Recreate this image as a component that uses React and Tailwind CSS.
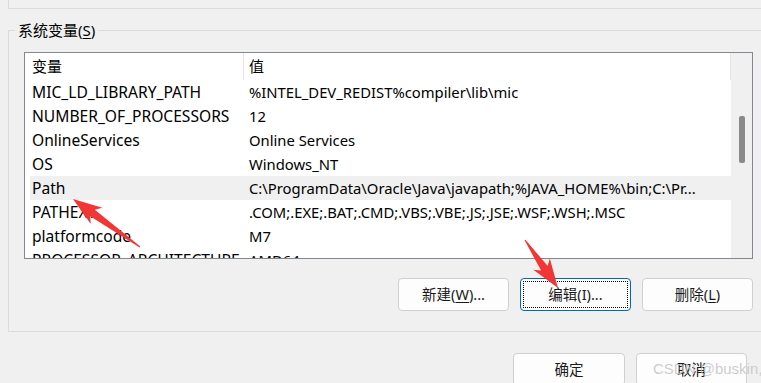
import React from 'react';

const rows = [
  { name: 'MIC_LD_LIBRARY_PATH', value: '%INTEL_DEV_REDIST%compiler\\lib\\mic' },
  { name: 'NUMBER_OF_PROCESSORS', value: '12' },
  { name: 'OnlineServices', value: 'Online Services' },
  { name: 'OS', value: 'Windows_NT' },
  { name: 'Path', value: 'C:\\ProgramData\\Oracle\\Java\\javapath;%JAVA_HOME%\\bin;C:\\Pr...', selected: true },
  { name: 'PATHEXT', value: '.COM;.EXE;.BAT;.CMD;.VBS;.VBE;.JS;.JSE;.WSF;.WSH;.MSC' },
  { name: 'platformcode', value: 'M7' },
  { name: 'PROCESSOR_ARCHITECTURE', value: 'AMD64' },
];

// red annotation arrow, tail -> tip
const arrowPoints = (x1, y1, x2, y2) => {
  const dx = x2 - x1;
  const dy = y2 - y1;
  const len = Math.hypot(dx, dy);
  const ux = dx / len;
  const uy = dy / len;
  const nx = -uy;
  const ny = ux;
  const headLen = 24;
  const bx = x2 - ux * headLen;
  const by = y2 - uy * headLen;
  const wx = bx - ux * 5;
  const wy = by - uy * 5;
  const pts = [
    [x1 - nx * 0.5, y1 - ny * 0.5],
    [x1 + nx * 0.5, y1 + ny * 0.5],
    [bx + nx * 4, by + ny * 4],
    [wx + nx * 10, wy + ny * 10],
    [x2, y2],
    [wx - nx * 10, wy - ny * 10],
    [bx - nx * 4, by - ny * 4],
  ];
  return pts.map(p => p.join(',')).join(' ');
};

const Btn = ({ children, focused, className = '' }) => (
  <button
    className={`relative h-[33px] w-[111px] rounded-[4px] border bg-[#fdfdfd] text-[14.5px] text-[#1a1a1a] ${
      focused ? 'border-[#0067c0]' : 'border-[#d0d0d0]'
    } ${className}`}
  >
    {focused && <span className="absolute inset-[2px] border border-dotted border-black" />}
    {children}
  </button>
);

export default function App() {
  return (
    <div
      className="relative h-[383px] w-[761px] overflow-hidden bg-[#f0f0f0] text-[14.5px] text-black"
      style={{ fontFamily: "'Segoe UI','Noto Sans','Noto Sans CJK SC',sans-serif" }}
    >
      {/* previous group (cut off) */}
      <div className="ml-2 h-[9px] border-b border-l border-[#dcdcdc]" />

      {/* 系统变量 group */}
      <div className="relative ml-2 mt-[21px] h-[302px] w-[760px] border border-[#dcdcdc] pl-[15px] pt-[21px]">
        <span className="absolute -top-[11px] left-[6px] bg-[#f0f0f0] px-[3px] text-[15px] leading-[20px]">
          系统变量(<span className="underline underline-offset-2">S</span>)
        </span>

        <div className="flex h-[207px] w-[729px] border border-[#828790] bg-white">
          <div className="flex-1 overflow-hidden">
            <div className="flex h-[27px] items-center text-[15px]">
              <div className="w-[218px] pl-[7px]">变量</div>
              <div className="h-full w-px bg-[#e5e5e5]" />
              <div className="flex-1 pl-[5px]">值</div>
              <div className="h-full w-px bg-[#e5e5e5]" />
            </div>
            {rows.map(r => (
              <div
                key={r.name}
                className={`ml-[5px] flex h-[24px] items-center whitespace-nowrap leading-[24px] ${
                  r.selected ? 'bg-[#f0f0f0]' : ''
                }`}
              >
                <div className="w-[219px] shrink-0 overflow-hidden pl-[2px] text-[15.6px]">{r.name}</div>
                <div className="flex-1 overflow-hidden text-[14.8px]">{r.value}</div>
              </div>
            ))}
          </div>
          {/* scrollbar */}
          <div className="w-[21px] bg-[#f0f0f0] pl-[8px] pt-[63px]">
            <div className="h-[47px] w-[6px] rounded-[2px] bg-[#8a8a8a]" />
          </div>
        </div>

        <div className="ml-[374px] mt-[19px] flex gap-[11px]">
          <Btn>
            新建(<span className="underline underline-offset-2">W</span>)...
          </Btn>
          <Btn focused>编辑(I)...</Btn>
          <Btn className="w-[110px]">
            删除(<span className="underline underline-offset-2">L</span>)
          </Btn>
        </div>
      </div>

      <div className="ml-[513px] mt-[21px] flex gap-[11px]">
        <Btn className="w-[112px]">确定</Btn>
        <Btn className="w-[110px]">取消</Btn>
      </div>

      {/* watermark */}
      <span
        className="absolute left-[653px] top-[358px] z-10 whitespace-nowrap text-[15px] text-[#c4c4c4]/85"
        style={{ fontFamily: "'Liberation Sans',sans-serif" }}
      >
        CSDN @buskin,
      </span>

      <svg className="pointer-events-none absolute inset-0 z-20" width="761" height="383">
        <polygon points={arrowPoints(140, 247, 73, 199)} fill="#f23535" />
        <polygon points={arrowPoints(525, 240, 558, 288)} fill="#f23535" />
      </svg>
    </div>
  );
}
